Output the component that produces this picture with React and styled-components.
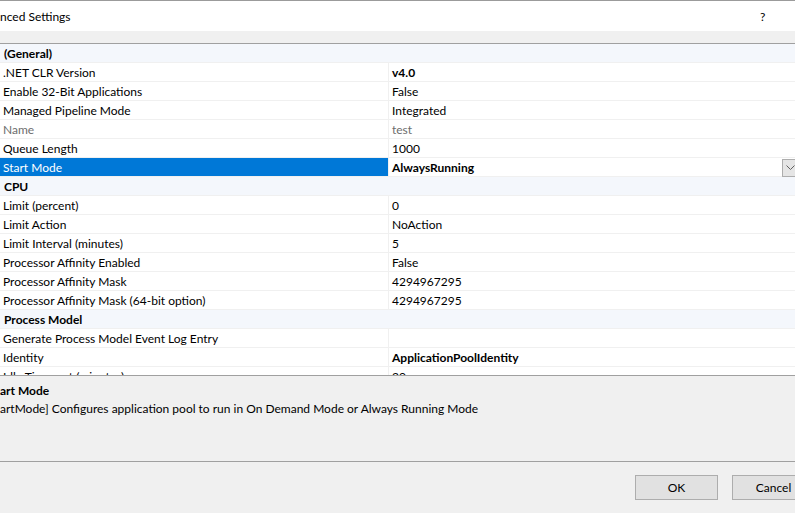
import React from 'react'
import styled, { createGlobalStyle } from 'styled-components'

const GlobalStyle = createGlobalStyle`
  body {
    margin: 0;
    background: #f0f0f0;
    overflow: hidden;
  }
`

const Dialog = styled.div`
  width: 827px;
  height: 513px;
  display: flex;
  flex-direction: column;
  box-sizing: border-box;
  overflow: hidden;
  background: #f0f0f0;
  border-top: 1px solid #9b9b9b;
  font-family: Lato, "Noto Sans", sans-serif;
  font-size: 12px;
  color: #000;
`

const TitleBar = styled.div`
  flex: none;
  height: 30px;
  background: #fff;
  display: flex;
  align-items: center;
  justify-content: space-between;
  padding-right: 60px;
`

const Title = styled.span`
  white-space: nowrap;
`

const Help = styled.span`
  width: 7px;
`

const Band = styled.div`
  flex: none;
  height: 12px;
  border-bottom: 1px solid #a0a0a0;
`

const Grid = styled.div`
  flex: none;
  height: 331px;
  overflow: hidden;
  background: #fff;
  border-bottom: 1px solid #a0a0a0;
`

const Row = styled.div`
  display: flex;
  height: 18px;
  border-bottom: 1px solid #f0f0f0;
  background: ${p => (p.$category ? '#f4f7fc' : '#fff')};
  white-space: nowrap;
`

const Label = styled.div`
  box-sizing: border-box;
  width: 388px;
  flex: none;
  padding: 1px 0 0 3px;
  line-height: 17px;
  background: ${p => (p.$selected ? '#0078d7' : 'transparent')};
  color: ${p => (p.$selected ? '#fff' : p.$dim ? '#6d6d6d' : '#000')};
`

const CategoryLabel = styled.div`
  padding: 1px 0 0 4px;
  line-height: 17px;
  font-weight: 700;
`

const Value = styled.div`
  flex: 1;
  display: flex;
  align-items: flex-start;
  border-left: 1px solid #f0f0f0;
  padding: 1px 0 0 3px;
  line-height: 17px;
  font-weight: ${p => (p.$bold ? 700 : 400)};
  color: ${p => (p.$dim ? '#6d6d6d' : '#000')};
`

const DropButton = styled.div`
  box-sizing: border-box;
  width: 17px;
  height: 18px;
  margin-left: auto;
  margin-right: 28px;
  border: 1px solid #adadad;
  background: #e5e5e5;
  display: flex;
  align-items: center;
  justify-content: center;
`

const Description = styled.div`
  flex: none;
  height: 86px;
  box-sizing: border-box;
  padding-top: 6px;
  border-bottom: 1px solid #a0a0a0;
  line-height: 18px;
  white-space: nowrap;
`

const DescTitle = styled.div`
  font-weight: 700;
`

const Footer = styled.div`
  flex: 1;
  display: flex;
  justify-content: flex-end;
  align-items: flex-start;
  gap: 14px;
  padding: 13px 12px 0 0;
`

const Button = styled.button`
  width: 83px;
  height: 25px;
  border: 1px solid #adadad;
  background: #e1e1e1;
  font-family: inherit;
  font-size: 12px;
  color: #000;
  padding: 0;
`

const rows = [
  { category: '(General)' },
  { label: '.NET CLR Version', value: 'v4.0', bold: true },
  { label: 'Enable 32-Bit Applications', value: 'False' },
  { label: 'Managed Pipeline Mode', value: 'Integrated' },
  { label: 'Name', value: 'test', dim: true },
  { label: 'Queue Length', value: '1000' },
  { label: 'Start Mode', value: 'AlwaysRunning', bold: true, selected: true },
  { category: 'CPU' },
  { label: 'Limit (percent)', value: '0' },
  { label: 'Limit Action', value: 'NoAction' },
  { label: 'Limit Interval (minutes)', value: '5' },
  { label: 'Processor Affinity Enabled', value: 'False' },
  { label: 'Processor Affinity Mask', value: '4294967295' },
  { label: 'Processor Affinity Mask (64-bit option)', value: '4294967295' },
  { category: 'Process Model' },
  { label: 'Generate Process Model Event Log Entry', value: '' },
  { label: 'Identity', value: 'ApplicationPoolIdentity', bold: true },
  { label: 'Idle Time-out (minutes)', value: '20' },
]

const Chevron = () => (
  <svg width="9" height="6" viewBox="0 0 9 6">
    <polyline points="0.5,0.5 4.5,4.5 8.5,0.5" fill="none" stroke="#606060" strokeWidth="1" />
  </svg>
)

export default function App() {
  return (
    <Dialog>
      <GlobalStyle />
      <TitleBar>
        <Title>nced Settings</Title>
        <Help>?</Help>
      </TitleBar>
      <Band />
      <Grid>
        {rows.map((r, i) =>
          r.category ? (
            <Row key={i} $category>
              <CategoryLabel>{r.category}</CategoryLabel>
            </Row>
          ) : (
            <Row key={i}>
              <Label $selected={r.selected} $dim={r.dim}>{r.label}</Label>
              <Value $bold={r.bold} $dim={r.dim}>
                {r.value}
                {r.selected && (
                  <DropButton>
                    <Chevron />
                  </DropButton>
                )}
              </Value>
            </Row>
          )
        )}
      </Grid>
      <Description>
        <DescTitle>art Mode</DescTitle>
        <div>artMode] Configures application pool to run in On Demand Mode or Always Running Mode</div>
      </Description>
      <Footer>
        <Button>OK</Button>
        <Button>Cancel</Button>
      </Footer>
    </Dialog>
  )
}
